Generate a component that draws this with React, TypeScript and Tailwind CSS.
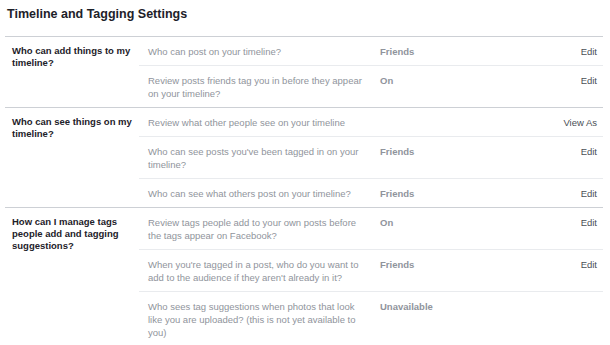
type Row = { text: string; value?: string; action?: string }
type Section = { label: string; rows: Row[] }

const sections: Section[] = [
    {
        label: "Who can add things to my timeline?",
        rows: [
            { text: "Who can post on your timeline?", value: "Friends", action: "Edit" },
            { text: "Review posts friends tag you in before they appear on your timeline?", value: "On", action: "Edit" },
        ],
    },
    {
        label: "Who can see things on my timeline?",
        rows: [
            { text: "Review what other people see on your timeline", action: "View As" },
            { text: "Who can see posts you've been tagged in on your timeline?", value: "Friends", action: "Edit" },
            { text: "Who can see what others post on your timeline?", value: "Friends", action: "Edit" },
        ],
    },
    {
        label: "How can I manage tags people add and tagging suggestions?",
        rows: [
            { text: "Review tags people add to your own posts before the tags appear on Facebook?", value: "On", action: "Edit" },
            { text: "When you're tagged in a post, who do you want to add to the audience if they aren't already in it?", value: "Friends", action: "Edit" },
            { text: "Who sees tag suggestions when photos that look like you are uploaded? (this is not yet available to you)", value: "Unavailable" },
        ],
    },
]

const App: React.FC = () => {
    return (
        <div className="w-[610px] h-[345px] bg-white overflow-hidden px-[5px] font-['Liberation_Sans',Arial,sans-serif]">
            <h1 className="pl-[2px] pt-[5px] pb-[13px] text-[12.5px] leading-[18px] font-bold text-[#1d2129]">
                Timeline and Tagging Settings
            </h1>
            <div className="w-[598px]">
                {
                    sections.map((section, sIndex) => (
                        <div key={sIndex} className="grid grid-cols-[134px_1fr] border-t border-[#cdd0d5]">
                            <div className="pl-[7px] pt-[8px] pr-[2px] text-[9.5px] leading-[12px] font-bold text-[#1d2129]">
                                {section.label}
                            </div>
                            <div className="flex flex-col">
                                {
                                    section.rows.map((row, rIndex) => (
                                        <div key={rIndex} className={`flex flex-row py-[7.5px] pl-[9px] pr-[6px] text-[9.5px] leading-[13px] ${rIndex > 0 ? 'border-t border-[#e9ebee]' : ''}`}>
                                            <div className="w-[232px] pr-[10px] text-[#90949c]">{row.text}</div>
                                            <div className="flex-1 font-bold text-[#90949c]">{row.value}</div>
                                            <div className="text-[#4b4f56]">{row.action}</div>
                                        </div>
                                    ))
                                }
                            </div>
                        </div>
                    ))
                }
            </div>
        </div>
    )
}

export default App
